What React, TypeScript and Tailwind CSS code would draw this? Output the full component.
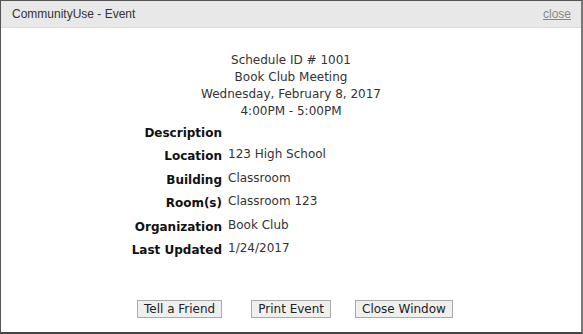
const rows: [string, string][] = [
  ["Description", ""],
  ["Location", "123 High School"],
  ["Building", "Classroom"],
  ["Room(s)", "Classroom 123"],
  ["Organization", "Book Club"],
  ["Last Updated", "1/24/2017"],
];

const buttons = ["Tell a Friend", "Print Event", "Close Window"];

const App = () => {
  return (
    <div className="w-[583px] h-[334px] bg-white">
      <div className="w-full h-full flex flex-col border border-[#555] border-r-2 border-r-[#777] border-b-2 border-b-[#444]">
        <div className="h-[27px] flex items-center justify-between pl-[11px] pr-[10px] bg-[#e8e8e8] border-b border-[#dcdcdc] font-['Liberation_Sans',Arial,sans-serif] text-[12px]">
          <span className="text-[#333]">CommunityUse - Event</span>
          <span className="text-[#888] underline">close</span>
        </div>
        <div className="flex-1 flex flex-col font-['DejaVu_Sans',Verdana,sans-serif] text-[12px] text-[#222]">
          <div className="mt-[24px] flex flex-col items-center leading-[17px] text-[#333]">
            <div>Schedule ID # 1001</div>
            <div>Book Club Meeting</div>
            <div>Wednesday, February 8, 2017</div>
            <div>4:00PM - 5:00PM</div>
          </div>
          <div className="mt-[2px] flex flex-col">
            {rows.map(([label, value]) => (
              <div key={label} className="flex h-[23.4px]">
                <div className="w-[221px] text-right font-bold pt-[2px] text-[#111]">{label}</div>
                <div className="pl-[6px] text-[#333]">{value}</div>
              </div>
            ))}
          </div>
          <div className="mt-auto mb-[14px] flex items-center pl-[136px]">
            {buttons.map((b, i) => (
              <button
                key={b}
                className={`h-[18px] px-[6px] leading-[16px] border border-[#aaa] bg-[#efefef] text-[#222] ${i === 1 ? "ml-[29px]" : i === 2 ? "ml-[24px]" : ""}`}
              >
                {b}
              </button>
            ))}
          </div>
        </div>
      </div>
    </div>
  );
};

export default App;
